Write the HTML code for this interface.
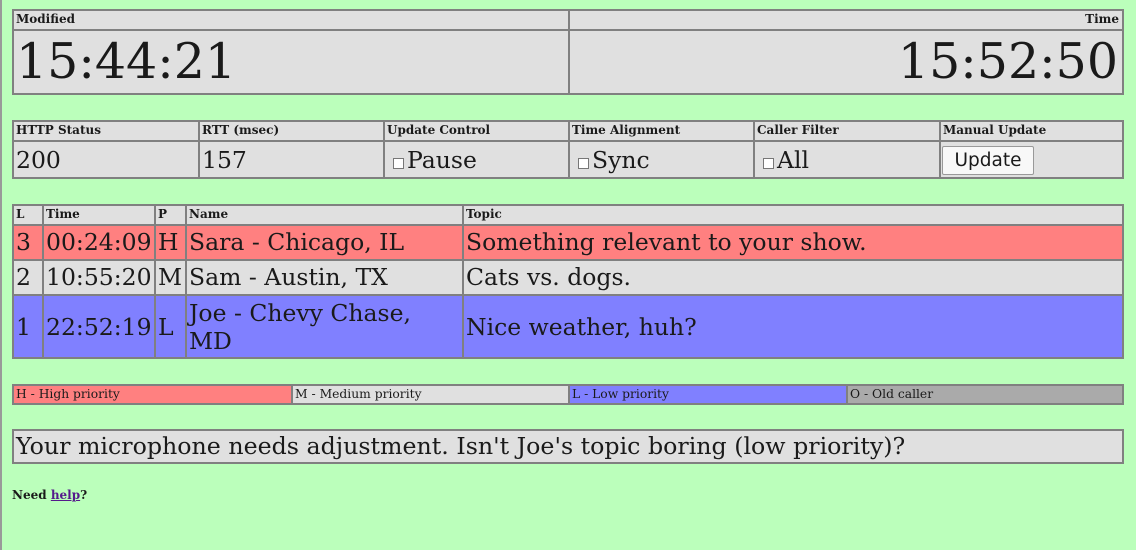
<!DOCTYPE html>
<html><head><meta charset="utf-8"><style>
body{margin:0;width:1136px;height:550px;background:#bbffbb;position:relative;overflow:hidden;font-family:"DejaVu Serif","Liberation Serif",serif;color:#1a1a1a}
.l{position:absolute;left:0;top:0;width:2px;height:550px;background:#999}
.c{position:absolute;box-sizing:border-box;border:2px solid #808080;background:#e0e0e0;white-space:nowrap;overflow:hidden;padding-left:2px}
.h{font-weight:bold;font-size:12px;line-height:17px}
.v{font-size:23.5px;line-height:33px}
.r{background:#ff8080}.b{background:#8080ff}.g{background:#aaaaaa}
.big{font-size:49px;line-height:62px}
.cb{display:inline-block;width:11px;height:11px;border:1px solid #777;background:#fff;box-sizing:border-box;margin:0 3px 0 6px;vertical-align:-1px}
.lg{font-size:12.3px;line-height:17px}
</style></head><body>
<div class="l"></div>
<div class="c h" style="left:12px;top:9px;width:558px;height:22px">Modified</div>
<div class="c h" style="left:568px;top:9px;width:556px;height:22px;text-align:right;padding-right:3px">Time</div>
<div class="c big" style="left:12px;top:29px;width:558px;height:66px">15:44:21</div>
<div class="c big" style="left:568px;top:29px;width:556px;height:66px;text-align:right;padding-right:4px">15:52:50</div>

<div class="c h" style="left:12px;top:120px;width:188px;height:22px">HTTP Status</div>
<div class="c h" style="left:198px;top:120px;width:187px;height:22px">RTT (msec)</div>
<div class="c h" style="left:383px;top:120px;width:187px;height:22px">Update Control</div>
<div class="c h" style="left:568px;top:120px;width:187px;height:22px">Time Alignment</div>
<div class="c h" style="left:753px;top:120px;width:188px;height:22px">Caller Filter</div>
<div class="c h" style="left:939px;top:120px;width:185px;height:22px">Manual Update</div>
<div class="c v" style="left:12px;top:140px;width:188px;height:39px;line-height:37px">200</div>
<div class="c v" style="left:198px;top:140px;width:187px;height:39px;line-height:37px">157</div>
<div class="c v" style="left:383px;top:140px;width:187px;height:39px;line-height:37px"><span class="cb"></span>Pause</div>
<div class="c v" style="left:568px;top:140px;width:187px;height:39px;line-height:37px"><span class="cb"></span>Sync</div>
<div class="c v" style="left:753px;top:140px;width:188px;height:39px;line-height:37px"><span class="cb"></span>All</div>
<div class="c" style="left:939px;top:140px;width:185px;height:39px"><div style="position:absolute;left:1px;top:4px;width:92px;height:29px;box-sizing:border-box;border:1px solid #999;background:#f8f8f8;border-radius:2px;font-family:'DejaVu Sans',sans-serif;font-size:18.5px;line-height:27px;text-align:center">Update</div></div>

<div class="c h" style="left:12px;top:204px;width:32px;height:22px">L</div>
<div class="c h" style="left:42px;top:204px;width:114px;height:22px">Time</div>
<div class="c h" style="left:154px;top:204px;width:33px;height:22px">P</div>
<div class="c h" style="left:185px;top:204px;width:279px;height:22px">Name</div>
<div class="c h" style="left:462px;top:204px;width:662px;height:22px">Topic</div>

<div class="c v r" style="left:12px;top:224px;width:32px;height:37px">3</div>
<div class="c v r" style="left:42px;top:224px;width:114px;height:37px">00:24:09</div>
<div class="c v r" style="left:154px;top:224px;width:33px;height:37px">H</div>
<div class="c v r" style="left:185px;top:224px;width:279px;height:37px">Sara - Chicago, IL</div>
<div class="c v r" style="left:462px;top:224px;width:662px;height:37px">Something relevant to your show.</div>

<div class="c v" style="left:12px;top:259px;width:32px;height:37px">2</div>
<div class="c v" style="left:42px;top:259px;width:114px;height:37px">10:55:20</div>
<div class="c v" style="left:154px;top:259px;width:33px;height:37px">M</div>
<div class="c v" style="left:185px;top:259px;width:279px;height:37px">Sam - Austin, TX</div>
<div class="c v" style="left:462px;top:259px;width:662px;height:37px">Cats vs. dogs.</div>

<div class="c v b" style="left:12px;top:294px;width:32px;height:65px;line-height:62px">1</div>
<div class="c v b" style="left:42px;top:294px;width:114px;height:65px;line-height:62px">22:52:19</div>
<div class="c v b" style="left:154px;top:294px;width:33px;height:65px;line-height:62px">L</div>
<div class="c v b" style="left:185px;top:294px;width:279px;height:65px;line-height:28px;white-space:normal;padding-top:3px">Joe - Chevy Chase,<br>MD</div>
<div class="c v b" style="left:462px;top:294px;width:662px;height:65px;line-height:62px">Nice weather, huh?</div>

<div class="c lg r" style="left:12px;top:384px;width:281px;height:21px">H - High priority</div>
<div class="c lg" style="left:291px;top:384px;width:279px;height:21px">M - Medium priority</div>
<div class="c lg b" style="left:568px;top:384px;width:280px;height:21px">L - Low priority</div>
<div class="c lg g" style="left:846px;top:384px;width:278px;height:21px">O - Old caller</div>

<div class="c" style="left:12px;top:429px;width:1112px;height:35px;font-size:23.7px;line-height:31px">Your microphone needs adjustment. Isn't Joe's topic boring (low priority)?</div>

<div style="position:absolute;left:12px;top:487px;font-size:12px;font-weight:bold;line-height:17px">Need <span style="color:#551a8b;text-decoration:underline">help</span>?</div>
</body></html>
